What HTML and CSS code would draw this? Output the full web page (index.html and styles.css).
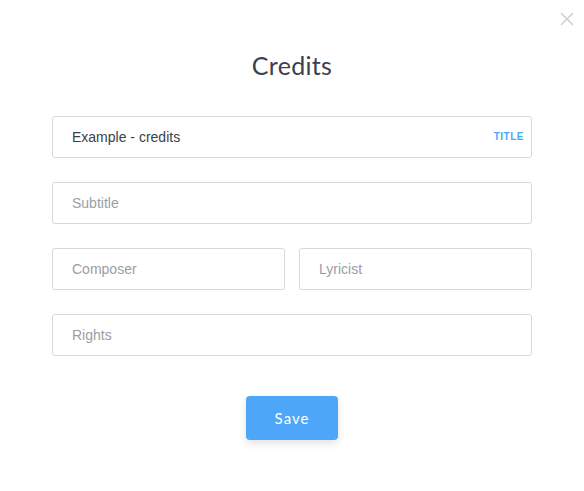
FILE: index.html
```html
<!DOCTYPE html>
<html lang="en">
<head>
    <meta charset="UTF-8">
    <title>Credits</title>
    <link rel="stylesheet" href="styles.css">
</head>
<body>
    <div class="modal">
        <button class="close" aria-label="Close">
            <svg width="14" height="14" viewBox="0 0 14 14">
                <path d="M1 1 L13 13 M13 1 L1 13" stroke="#c9d0d6" stroke-width="1.5" fill="none"/>
            </svg>
        </button>
        <h1>Credits</h1>
        <form class="credits-form">
            <div class="field">
                <input type="text" value="Example - credits">
                <span class="tag">TITLE</span>
            </div>
            <div class="field">
                <input type="text" placeholder="Subtitle">
            </div>
            <div class="row">
                <div class="field">
                    <input type="text" placeholder="Composer">
                </div>
                <div class="field">
                    <input type="text" placeholder="Lyricist">
                </div>
            </div>
            <div class="field">
                <input type="text" placeholder="Rights">
            </div>
            <div class="actions">
                <button type="button" class="button">Save</button>
            </div>
        </form>
    </div>
</body>
</html>
```

FILE: styles.css
```css
body {
    margin: 0;
    padding: 0;
    background: white;
    font-family: "Liberation Sans", Arial, sans-serif;
}
.modal {
    position: relative;
    width: 584px;
    height: 491px;
    padding-top: 48px;
    box-sizing: border-box;
}
.close {
    position: absolute;
    top: 12px;
    right: 10px;
    border: none;
    background: none;
    padding: 0;
    cursor: pointer;
}
h1 {
    margin: 0 0 34px;
    text-align: center;
    font-family: Lato, "Open Sans", sans-serif;
    font-weight: 400;
    font-size: 25px;
    line-height: 34px;
    color: #3a4050;
    letter-spacing: 0.3px;
}
.credits-form {
    width: 480px;
    margin: 0 auto;
    display: flex;
    flex-direction: column;
    gap: 24px;
}
.row {
    display: flex;
    gap: 14px;
}
.row .field {
    flex: 1;
}
.field {
    position: relative;
}
.field input {
    width: 100%;
    height: 42px;
    box-sizing: border-box;
    border: 1px solid #d3dade;
    border-radius: 3px;
    padding: 0 19px;
    font-family: "Liberation Sans", Arial, sans-serif;
    font-size: 14px;
    color: #3a3f4a;
    outline: none;
}
.field input::placeholder {
    color: #9a9ea4;
}
.tag {
    position: absolute;
    right: 8px;
    top: 15px;
    font-size: 10px;
    font-weight: 700;
    letter-spacing: 0.5px;
    color: #4ea6f8;
}
.actions {
    display: flex;
    justify-content: center;
    margin-top: 16px;
}
.button {
    width: 92px;
    height: 44px;
    background-color: #4ea6f8;
    color: white;
    border: none;
    border-radius: 4px;
    font-family: Lato, "Open Sans", sans-serif;
    font-size: 15px;
    letter-spacing: 1px;
    box-shadow: 0 3px 8px rgba(0, 0, 0, 0.12);
    cursor: pointer;
}
```
